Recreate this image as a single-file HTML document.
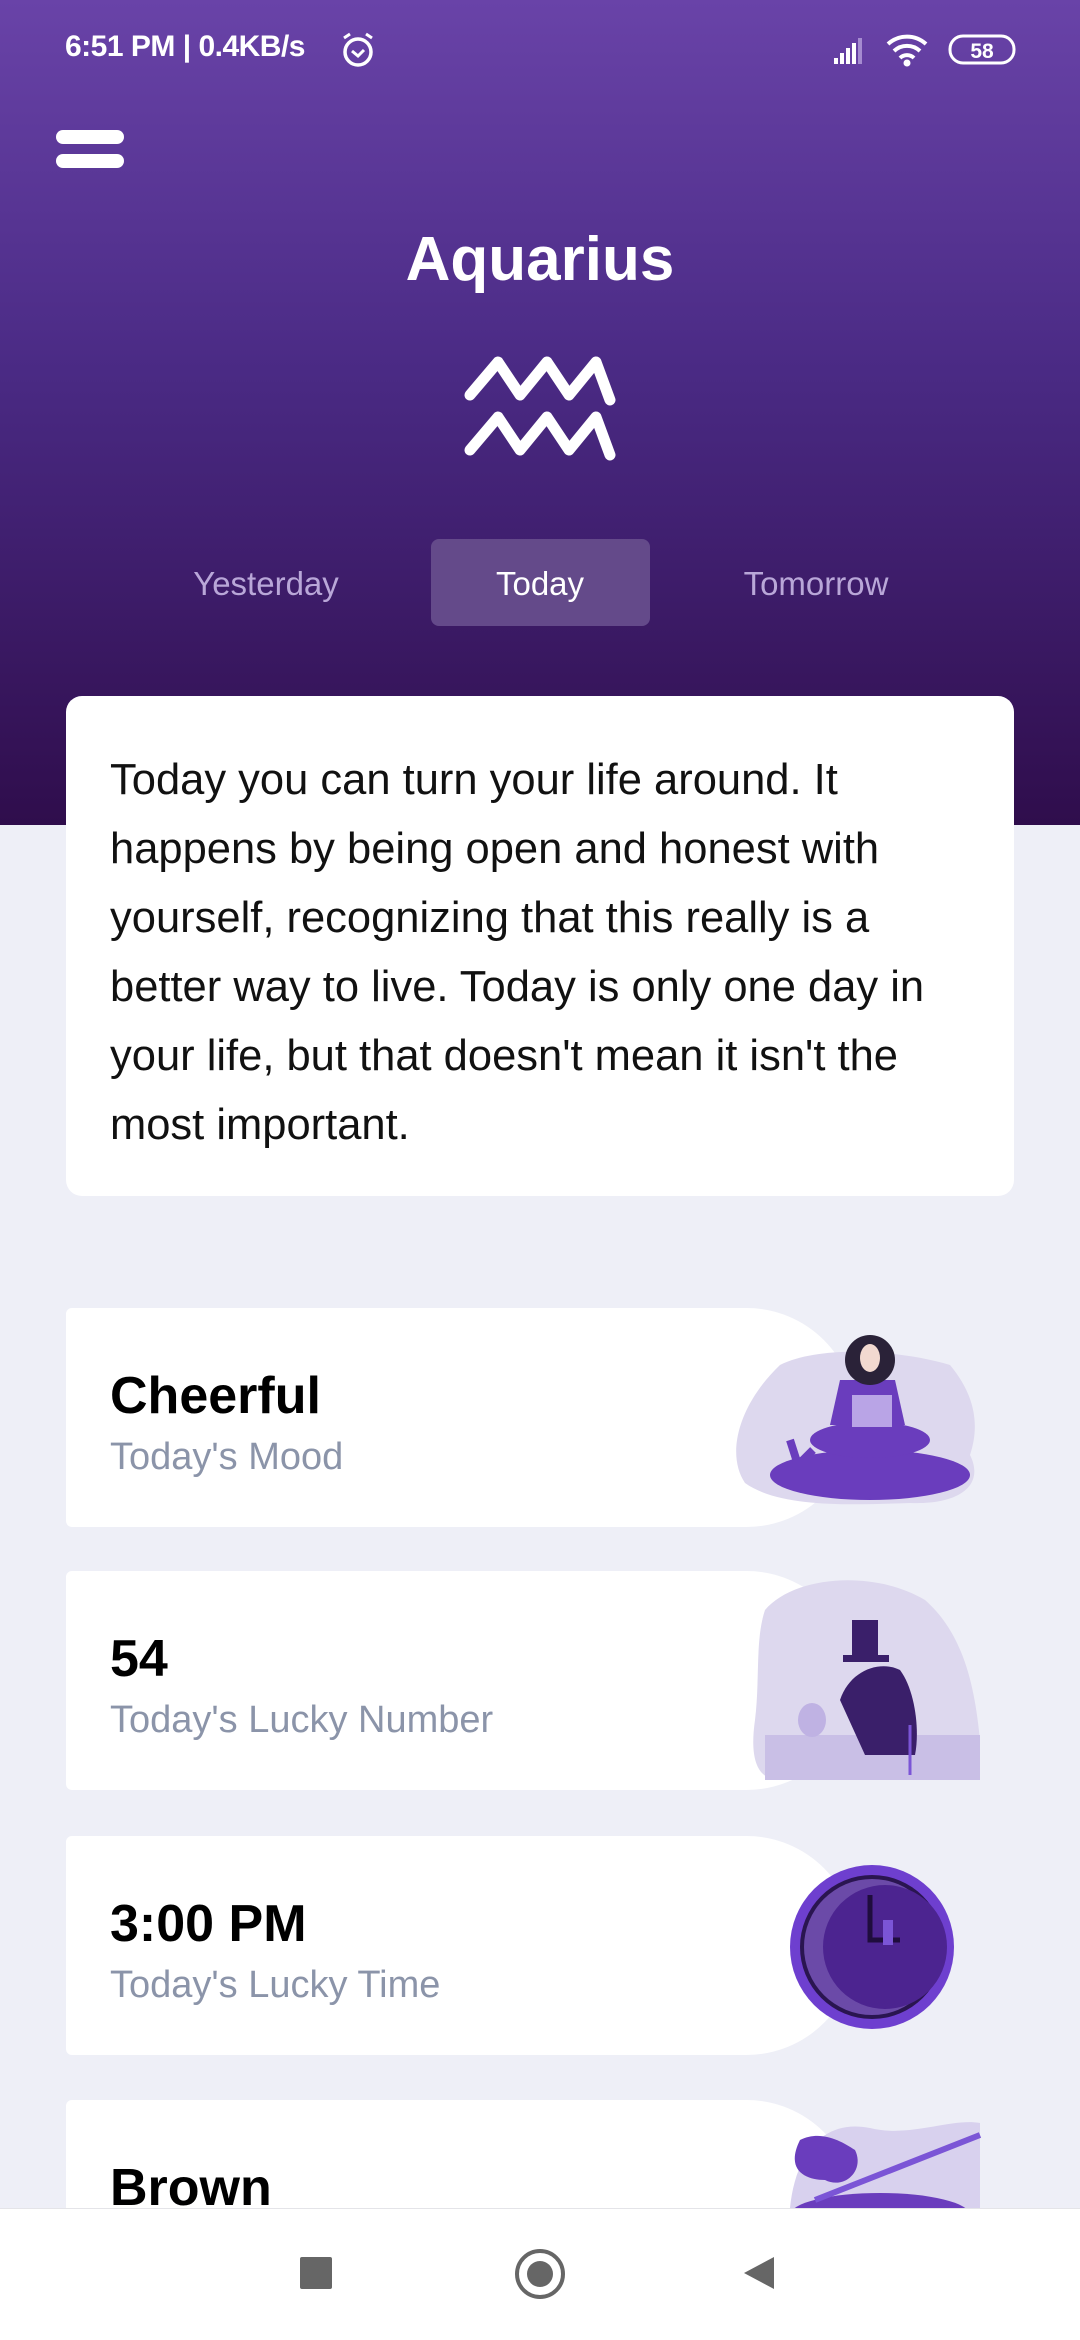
<!DOCTYPE html>
<html><head><meta charset="utf-8"><style>
*{margin:0;padding:0;box-sizing:border-box}
body{width:1080px;height:2340px;background:#eeeff7;font-family:"Liberation Sans",sans-serif;position:relative;overflow:hidden}
.hdr{position:absolute;left:0;top:0;width:1080px;height:825px;background:linear-gradient(#6943a8,#4a2a84 45%,#2f0d4c)}
.st{position:absolute;top:30px;left:65px;color:#fff;font-size:30px;font-weight:bold;letter-spacing:-0.5px}
.bar{position:absolute;left:56px;width:68px;height:14px;border-radius:7px;background:#fff}
.title{position:absolute;top:224px;width:1080px;text-align:center;color:#fff;font-size:62px;font-weight:bold}
.tab{position:absolute;top:565px;font-size:33px;color:#b9a7d8;text-align:center;width:260px}
.tb{position:absolute;left:431px;top:539px;width:219px;height:87px;border-radius:8px;background:#644a8a}
.card{position:absolute;left:66px;top:696px;width:948px;height:500px;background:#fff;border-radius:16px;padding:50px 62px 0 44px;font-size:43.5px;line-height:69px;color:#111}
.c{position:absolute;left:66px;width:790px;height:219px;background:#fff;border-radius:6px 110px 110px 6px/6px 110px 110px 6px}
.c b{position:absolute;left:44px;top:58px;font-size:52px;color:#000}
.c span{position:absolute;left:44px;top:128px;font-size:38px;color:#8b94a9}
.nav{position:absolute;left:0;top:2208px;width:1080px;height:132px;background:#fff;border-top:1px solid #e4e4e8}
</style></head><body>
<div class="hdr"></div>
<div class="st">6:51 PM | 0.4KB/s</div>
<svg style="position:absolute;left:338px;top:30px" width="40" height="40" viewBox="0 0 40 40"><circle cx="20" cy="22" r="13" fill="none" stroke="#fff" stroke-width="3.5"/><path d="M14 21l6 5 6-6" fill="none" stroke="#fff" stroke-width="3"/><path d="M6 8l6-4M34 8l-6-4" stroke="#fff" stroke-width="3"/></svg>
<svg style="position:absolute;left:830px;top:30px" width="190" height="40" viewBox="0 0 190 40"><path d="M4 34h4v-6h-4zM10 34h4v-11h-4zM16 34h4v-16h-4zM22 34h4v-21h-4z" fill="#fff"/><path d="M28 34h4v-26h-4z" fill="#a58bd0"/><path d="M58 14a28 28 0 0 1 38 0M64 21a19 19 0 0 1 26 0M70 28a10 10 0 0 1 14 0" stroke="#fff" stroke-width="4" fill="none"/><circle cx="77" cy="33" r="3.5" fill="#fff"/><rect x="120" y="6" width="64" height="27" rx="13" fill="none" stroke="#fff" stroke-width="3"/><text x="152" y="28" font-size="21" font-weight="bold" fill="#fff" text-anchor="middle" font-family="Liberation Sans">58</text></svg>
<div class="bar" style="top:130px"></div><div class="bar" style="top:154px"></div>
<div class="title">Aquarius</div>
<svg style="position:absolute;left:458px;top:350px" width="165" height="115" viewBox="0 0 165 115"><path d="M12 45L40 12L62 45L89 12L111 45L138 12L152 50M12 100L40 67L62 100L89 67L111 100L138 67L152 105" fill="none" stroke="#fff" stroke-width="11" stroke-linecap="round" stroke-linejoin="round"/></svg>
<div class="tb"></div>
<div class="tab" style="left:136px">Yesterday</div>
<div class="tab" style="left:410px;color:#fff">Today</div>
<div class="tab" style="left:686px">Tomorrow</div>
<div class="card">Today you can turn your life around. It happens by being open and honest with yourself, recognizing that this really is a better way to live. Today is only one day in your life, but that doesn't mean it isn't the most important.</div>
<div class="c" style="top:1308px"><b>Cheerful</b><span>Today's Mood</span></div>
<div class="c" style="top:1571px"><b>54</b><span>Today's Lucky Number</span></div>
<div class="c" style="top:1836px"><b>3:00 PM</b><span>Today's Lucky Time</span></div>
<div class="c" style="top:2100px"><b>Brown</b></div>
<svg style="position:absolute;left:0;top:0" width="1080" height="2208" viewBox="0 0 1080 2208">
<path d="M780 1365c40-20 120-15 170 0 25 30 30 60 20 90 15 30-10 50-60 48-60 2-130 5-165-20-20-30-5-80 35-118z" fill="#ddd8ee"/>
<ellipse cx="870" cy="1475" rx="100" ry="25" fill="#6a3dbd"/>
<path d="M790 1440l8 25 15-15" stroke="#6a3dbd" stroke-width="8" fill="none"/>
<ellipse cx="870" cy="1440" rx="60" ry="18" fill="#6a3dbd"/>
<path d="M840 1380h55l10 45h-75z" fill="#6a3dbd"/>
<rect x="852" y="1395" width="40" height="32" fill="#b9a4e6"/>
<ellipse cx="870" cy="1360" rx="25" ry="25" fill="#2a2238"/><ellipse cx="870" cy="1358" rx="10" ry="14" fill="#f2d9d0"/>
<path d="M765 1610c30-35 110-40 160-10 40 35 50 90 55 140 0 30-30 40-70 40h-130c-25 0-30-25-25-60 5-40 0-80 10-110z" fill="#ddd8ee"/>
<rect x="765" y="1735" width="215" height="45" fill="#c9bfe6"/>
<path d="M840 1700c10-30 40-40 60-30 15 20 20 60 15 85h-50z" fill="#3a1f6a"/>
<rect x="852" y="1620" width="26" height="38" fill="#3a1f6a"/><rect x="843" y="1655" width="46" height="7" fill="#3a1f6a"/>
<ellipse cx="812" cy="1720" rx="14" ry="17" fill="#bfb2e3"/>
<line x1="910" y1="1725" x2="910" y2="1775" stroke="#7b55d6" stroke-width="3"/>
<circle cx="872" cy="1947" r="82" fill="#6e3fcf"/><circle cx="872" cy="1947" r="72" fill="#2a1550"/><circle cx="872" cy="1947" r="68" fill="#6b4aa8"/><circle cx="885" cy="1947" r="62" fill="#4c2490"/>
<path d="M870 1895v45h30" stroke="#1f0d3d" stroke-width="5" fill="none"/>
<rect x="883" y="1920" width="10" height="25" fill="#7b55d6"/>
<path d="M790 2208c5-50 30-90 80-80 40 10 80-10 110-5v85z" fill="#d8d1ee"/>
<path d="M800 2140c20-10 40 0 55 10 10 20-10 40-30 30-20 0-40-10-25-40z" fill="#6a3dbd"/>
<ellipse cx="880" cy="2215" rx="90" ry="22" fill="#6a3dbd"/>
<line x1="815" y1="2200" x2="980" y2="2135" stroke="#7b55d6" stroke-width="6"/>
</svg>
<div class="nav"></div>
<div style="position:absolute;left:300px;top:2257px;width:32px;height:32px;background:#666;border-radius:2px"></div>
<div style="position:absolute;left:515px;top:2249px;width:50px;height:50px;border:4px solid #666;border-radius:50%"></div>
<div style="position:absolute;left:527px;top:2261px;width:26px;height:26px;background:#666;border-radius:50%"></div>
<svg style="position:absolute;left:742px;top:2255px" width="36" height="36" viewBox="0 0 36 36"><path d="M32 2v32L2 18z" fill="#666"/></svg>
</body></html>
